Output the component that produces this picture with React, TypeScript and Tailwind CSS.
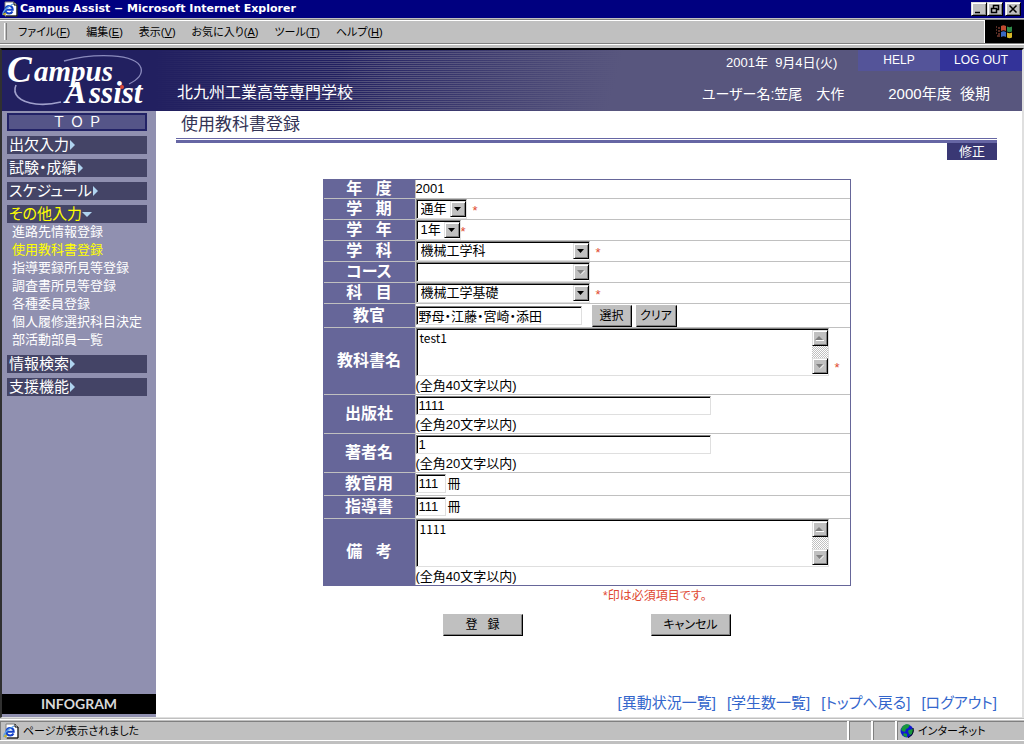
import React from "react";
import clsx from "clsx";

const jp = "font-['Liberation_Sans','Noto_Sans_CJK_JP',sans-serif]";
const sunken =
  "border border-t-[#808080] border-l-[#808080] border-b-[#dfdfdf] border-r-[#dfdfdf] shadow-[inset_1px_1px_0_#000]";
const raised =
  "border border-t-[#dfdfdf] border-l-[#dfdfdf] border-b-black border-r-black bg-[#c0c0c0] shadow-[inset_1px_1px_0_#fff,inset_-1px_-1px_0_#808080]";
const plainRaised =
  "border border-t-[#c0c0c0] border-l-[#c0c0c0] border-b-black border-r-black bg-[#c0c0c0] shadow-[inset_-1px_-1px_0_#808080]";

function PageIcon() {
  return (
    <svg className="h-4 w-4 shrink-0" viewBox="0 0 16 16" aria-hidden="true">
      <path d="M3 1h9l3 3v11H3z" fill="#fff" stroke="#808080" />
      <path d="M12 1v3h3M15 4v11H4" fill="none" stroke="#000" />
      <path d="M10.500 10.500c-.8 1.600-2 2-3.200 2C5 12.500 3.500 11 3.500 8.800S5 5 7.200 5s3.500 1.400 3.500 3.800H4" fill="none" stroke="#1240c8" strokeWidth="2" />
      <path d="M1 14c-1-2 2-7 10-11" fill="none" stroke="#5aa0e8" strokeWidth="1.200" />
      <path d="M1 13.500l3-1" stroke="#c8b820" strokeWidth="1.500" />
    </svg>
  );
}

function WindowsFlag() {
  return (
    <svg className="h-4 w-5" viewBox="0 0 20 16" aria-hidden="true">
      <path d="M6 2c2-1 3-1 5 0v5c-2-1-3-1-5 0z" fill="#c04a30" />
      <path d="M12 2.500c2 1 3 1 5 0v5c-2 1-3 1-5 0z" fill="#2f8a48" />
      <path d="M6 8c2-1 3-1 5 0v5c-2-1-3-1-5 0z" fill="#3a68c0" />
      <path d="M12 8.500c2 1 3 1 5 0v5c-2 1-3 1-5 0z" fill="#d8b828" />
      <path d="M1 3h1M3 4h2M1 6h1M3 7h2M1 9h1M3 10h2M2 12h3" stroke="#b05848" strokeWidth="1.200" />
      <path d="M11.500 2v11.500" stroke="#000" />
    </svg>
  );
}

function Globe() {
  return (
    <svg className="h-[14px] w-[14px] shrink-0" viewBox="0 0 14 14" aria-hidden="true">
      <circle cx="7" cy="7" r="6.500" fill="#1018d0" />
      <path d="M3 2c2-2 5-2 7-1l-2 3-2 1-1 3-3-1-1-2zM9 6l4-1c.5 2 0 4-2 6l-2-1-1-3zM4 9l3 1v3c-2 0-3-1-4-2z" fill="#18983c" />
      <path d="M13 4c1 4-1 8-5 9.500" fill="none" stroke="#000" strokeWidth="1" />
    </svg>
  );
}

function Logo() {
  return (
    <svg className="block h-[61px] w-[154px]" viewBox="0 0 154 61" role="img" aria-label="Campus Assist">
      <path d="M62 11C92 3 134 3 139 18c2 7-4 12-12 16" fill="none" stroke="#8a8abc" strokeWidth="1.300" />
      <path d="M14 35c-4 9 3 17 20 19 8 1 17 0 25-2" fill="none" stroke="#a0a0cc" strokeWidth="1.600" />
      <g fontFamily="Liberation Serif, serif" fontStyle="italic" fontWeight="bold" fill="#fff">
        <text x="5" y="32" fontSize="37">C</text>
        <text x="32" y="31" fontSize="29">ampus</text>
        <text x="63" y="53" fontSize="32">A</text>
        <text x="87" y="53" fontSize="31">ssist</text>
      </g>
      <circle cx="120" cy="37" r="2" fill="#e04838" />
    </svg>
  );
}

function WinButton({ label, d }: { label: string; d: string }) {
  return (
    <button type="button" aria-label={label} className={clsx("flex h-[14px] w-4 items-center justify-center", raised)}>
      <svg className="h-[10px] w-[10px]" viewBox="0 0 10 10" aria-hidden="true">
        <path d={d} fill="none" stroke="#000" strokeWidth="1.500" />
      </svg>
    </button>
  );
}

function Arrow({ up, muted }: { up?: boolean; muted?: boolean }) {
  return (
    <svg className="h-[6px] w-[9px]" viewBox="0 0 9 6" aria-hidden="true">
      {muted && <path d={up ? "M1 5.500h8" : "M9 1.500L5 5.500"} stroke="#fff" />}
      <path d={up ? "M0 5l4-4 4 4z" : "M1 1h7L4.500 5z"} fill={muted ? "#808080" : "#000"} />
    </svg>
  );
}

function Select({ id, value, width, disabled }: { id: string; value: string; width: string; disabled?: boolean }) {
  return (
    <span className={clsx("relative block h-5", width)}>
      <select
        id={id}
        disabled={disabled}
        className={clsx("block h-5 w-full appearance-none rounded-none bg-white pl-1 text-[13px] leading-4 text-black opacity-100", sunken)}
      >
        <option>{value}</option>
      </select>
      <span className={clsx("pointer-events-none absolute top-[2px] right-px flex h-4 w-4 items-center justify-center", raised)}>
        <Arrow muted={disabled} />
      </span>
    </span>
  );
}

function TextArea({ id, value }: { id: string; value: string }) {
  return (
    <div className={clsx("flex h-12 w-[413px] bg-white py-px pl-px", sunken)}>
      <textarea id={id} defaultValue={value} className="min-w-0 flex-1 resize-none bg-transparent px-[2px] font-['Noto_Sans_CJK_JP',sans-serif] text-[12px] leading-4 outline-none" />
      <div className="flex w-4 flex-col bg-[repeating-conic-gradient(#c0c0c0_0_25%,#fff_0_50%)] bg-[length:2px_2px]" aria-hidden="true">
        <span className={clsx("flex h-4 items-center justify-center", raised)}><Arrow up muted /></span>
        <span className={clsx("mt-auto flex h-4 items-center justify-center", raised)}><Arrow muted /></span>
      </div>
    </div>
  );
}

function Input({ id, value, width }: { id: string; value: string; width: string }) {
  return <input id={id} defaultValue={value} className={clsx("block h-[19px] bg-white px-[2px] text-[13px] leading-4 outline-none", width, sunken)} />;
}

function Button({ children, width }: { children: React.ReactNode; width: string }) {
  return <button type="button" className={clsx("h-[22px] text-[12px] leading-4", width, plainRaised)}>{children}</button>;
}

const Req = () => <span className="pt-1 text-[13px] leading-4 text-[#e04830]">*</span>;
const Note = ({ children }: { children: React.ReactNode }) => <p className="pt-[2px] text-[13px] leading-4">{children}</p>;

function Row({ label, id, height, last, children }: { label: string; id?: string; height: string; last?: boolean; children: React.ReactNode }) {
  const cell = "flex w-[92px] shrink-0 items-center justify-center border-r border-[#c0c0c0] bg-[#666699] text-[16px] leading-[18px] font-bold whitespace-pre text-white";
  return (
    <div className={clsx("flex", height, !last && "border-b border-[#c0c0c0]")}>
      {id ? <label htmlFor={id} className={cell}>{label}</label> : <span className={cell}>{label}</span>}
      <div className="flex min-w-0 flex-1 flex-col justify-center">{children}</div>
    </div>
  );
}

const menus = [
  ["ファイル", "F"], ["編集", "E"], ["表示", "V"], ["お気に入り", "A"], ["ツール", "T"], ["ヘルプ", "H"],
];
const subItems = ["進路先情報登録", "使用教科書登録", "指導要録所見等登録", "調査書所見等登録", "各種委員登録", "個人履修選択科目決定", "部活動部員一覧"];
const footerLinks = ["異動状況一覧", "学生数一覧", "トップへ戻る", "ログアウト"];

function NavItem({ children, open }: { children: React.ReactNode; open?: boolean }) {
  return (
    <a href="#" className={clsx("flex h-[18px] items-center bg-[#444466] pl-[2px] text-[15px] leading-[18px]", open ? "text-[#ffff00]" : "text-white")}>
      {children}
      <svg className="h-[10px] w-[10px]" viewBox="0 0 10 10" aria-hidden="true">
        <path d={open ? "M0 3h10L5 8z" : "M1 0l5 5-5 5z"} fill="#b0d4f0" />
      </svg>
    </a>
  );
}

export default function App() {
  return (
    <div className={clsx("flex min-h-screen flex-col bg-[#c0c0c0] text-black [font-feature-settings:'palt']", jp)}>
      <header className="flex h-[18px] items-center bg-[#000080] pr-[3px] pl-[2px]">
        <PageIcon />
        <h1 className="ml-[2px] font-['DejaVu_Sans',sans-serif] text-[11px] leading-[18px] font-bold text-white">Campus Assist − Microsoft Internet Explorer</h1>
        <div className="ml-auto flex">
          <WinButton label="Minimize" d="M1 8.500h5" />
          <WinButton label="Restore" d="M3.500 4V1.500h5v4H6M1.500 4.500h5v4h-5z" />
          <span className="w-[2px]" />
          <WinButton label="Close" d="M1.500 1.500l7 7M8.500 1.500l-7 7" />
        </div>
      </header>

      <nav className="mt-px flex h-[25px] items-stretch border-t border-b border-[#808080] text-[11px] shadow-[inset_0_1px_0_#fff,0_1px_0_#fff]">
        <span className="my-[3px] ml-1 w-[3px] border-r border-l border-r-[#808080] border-l-white" />
        <div className="ml-[11px] flex flex-1 items-center gap-4">
          {menus.map(([name, key]) => (
            <button key={key} type="button" className="leading-4 whitespace-nowrap">{name}(<u>{key}</u>)</button>
          ))}
        </div>
        <div className="flex w-10 items-center justify-center border-l border-white bg-black"><WindowsFlag /></div>
      </nav>

      <div className="mt-1 flex flex-1 flex-col border-t-2 border-r-2 border-b border-l-2 border-t-black border-r-[#dfdfdf] border-b-[#dfdfdf] border-l-[#303030] bg-white">
        <div className="flex h-[61px] bg-[#222060] bg-[linear-gradient(105deg,transparent_33%,#58567e_60%),linear-gradient(90deg,#222060_15%,transparent_38%),repeating-linear-gradient(180deg,#222060_0_1px,#58567e_1px_2px)] text-white">
          <Logo />
          <p className="ml-[21px] self-end pb-2 text-[16px] leading-5">北九州工業高等専門学校</p>
          <div className="ml-auto flex flex-col">
            <div className="flex h-[21px] text-[12px] leading-[21px]">
              <p className="flex-1 pt-[2px] pl-6 text-[13px] whitespace-pre">2001年  9月4日(火)</p>
              <a href="#" className="w-[82px] bg-[#545499] text-center">HELP</a>
              <a href="#" className="w-[82px] bg-[#333399] text-center">LOG OUT</a>
            </div>
            <div className="flex flex-1 items-center gap-11 pt-[6px] pr-8 text-[15px] leading-5">
              <p className="text-[14px]">ユーザー名:笠尾　大作</p>
              <p className="whitespace-pre">2000年度  後期</p>
            </div>
          </div>
        </div>

        <div className="flex flex-1">
          <aside className="flex w-[154px] shrink-0 flex-col bg-[#9090b0]">
            <nav className="flex flex-1 flex-col gap-[5px] pt-[2px] pr-[9px] pl-[5px]">
              <a href="#" className="flex h-[18px] items-center justify-center border-2 border-[#222266] bg-[#555588] text-[14px] leading-[14px] text-white [font-feature-settings:normal]">Ｔ Ｏ Ｐ</a>
              <NavItem>出欠入力</NavItem>
              <NavItem>試験・成績</NavItem>
              <NavItem>スケジュール</NavItem>
              <div>
                <NavItem open>その他入力</NavItem>
                <ul className="pb-px pl-[5px] text-[13px] leading-[18px] text-white">
                  {subItems.map((s, i) => (
                    <li key={s}><a href="#" className={clsx("whitespace-nowrap", i === 1 && "text-[#ffff00]")}>{s}</a></li>
                  ))}
                </ul>
              </div>
              <NavItem>情報検索</NavItem>
              <NavItem>支援機能</NavItem>
            </nav>
            <p className="mb-[3px] bg-black text-center font-['Lato',sans-serif] text-[14px] leading-5 font-bold text-[#d8d8d8]">INFOGRAM</p>
          </aside>

          <main className="flex min-w-0 flex-1 flex-col pr-[25px] pl-5">
            <h2 className="pl-[5px] text-[17px] leading-[27px] text-[#333355]">使用教科書登録</h2>
            <div className="h-[5px] border-t border-b-3 border-[#6666a4]" />
            <button type="button" className="h-[17px] w-[50px] self-end bg-[#3a3874] text-[13px] leading-4 text-white">修正</button>

            <form className="mx-auto mt-[19px] w-[528px]">
              <div className="border border-[#666699]">
                <Row label="年   度" height="h-[19px]"><span className="text-[13px] leading-[18px]">2001</span></Row>
                <Row label="学   期" id="term" height="h-[21px]"><div className="flex gap-[6px]"><Select id="term" value="通年" width="w-[51px]" /><Req /></div></Row>
                <Row label="学   年" id="grade" height="h-[21px]"><div className="flex"><Select id="grade" value="1年" width="w-[45px]" /><Req /></div></Row>
                <Row label="学   科" id="dept" height="h-[21px]"><div className="flex gap-[6px]"><Select id="dept" value="機械工学科" width="w-[174px]" /><Req /></div></Row>
                <Row label="コース" id="course" height="h-[21px]"><Select id="course" value="" width="w-[174px]" disabled /></Row>
                <Row label="科   目" id="subject" height="h-[21px]"><div className="flex gap-[6px]"><Select id="subject" value="機械工学基礎" width="w-[174px]" /><Req /></div></Row>
                <Row label="教官" id="teacher" height="h-6">
                  <div className="flex items-center">
                    <Input id="teacher" value="野母・江藤・宮崎・添田" width="w-[166px]" />
                    <span className="ml-[10px] flex gap-1"><Button width="w-10">選択</Button><Button width="w-[41px]">クリア</Button></span>
                  </div>
                </Row>
                <Row label="教科書名" id="title" height="h-[67px]">
                  <div className="flex items-end gap-[6px]"><TextArea id="title" value="test1" /><Req /></div>
                  <Note>(全角40文字以内)</Note>
                </Row>
                <Row label="出版社" id="publisher" height="h-[39px]"><Input id="publisher" value="1111" width="w-[295px]" /><Note>(全角20文字以内)</Note></Row>
                <Row label="著者名" id="author" height="h-[39px]"><Input id="author" value="1" width="w-[295px]" /><Note>(全角20文字以内)</Note></Row>
                <Row label="教官用" id="copies" height="h-[23px]"><div className="flex gap-[2px] text-[13px]"><Input id="copies" value="111" width="w-[30px]" />冊</div></Row>
                <Row label="指導書" id="guides" height="h-[23px]"><div className="flex gap-[2px] text-[13px]"><Input id="guides" value="111" width="w-[30px]" />冊</div></Row>
                <Row label="備   考" id="remarks" height="h-[66px]" last><TextArea id="remarks" value="1111" /><Note>(全角40文字以内)</Note></Row>
              </div>
              <p className="pr-36 text-right text-[12px] leading-5 text-[#e04830]">*印は必須項目です。</p>
              <div className="mt-2 flex justify-center gap-32">
                <Button width="w-20"><span className="whitespace-pre">登   録</span></Button>
                <Button width="w-20">キャンセル</Button>
              </div>
            </form>

            <div className="mt-auto flex justify-end gap-[11px] pb-1 text-[15px] leading-5 text-[#3366cc]">
              {footerLinks.map((l) => <a key={l} href="#">[{l}]</a>)}
            </div>
          </main>
        </div>
      </div>

      <footer className="mt-px mb-[3px] flex h-[22px] gap-[2px] border-t border-b border-white pt-px text-[11px] leading-4">
        <p className="flex flex-1 items-center gap-1 border-t border-l border-[#808080] pl-[2px]"><PageIcon />ページが表示されました</p>
        <span className="w-[22px] border-t border-l border-[#808080] shadow-[-2px_0_0_#fff]" />
        <span className="w-[22px] border-t border-l border-[#808080] shadow-[-2px_0_0_#fff]" />
        <p className="flex w-[127px] items-center gap-1 border-t border-l border-[#808080] pl-[2px] shadow-[-2px_0_0_#fff]"><Globe />インターネット</p>
      </footer>
    </div>
  );
}
